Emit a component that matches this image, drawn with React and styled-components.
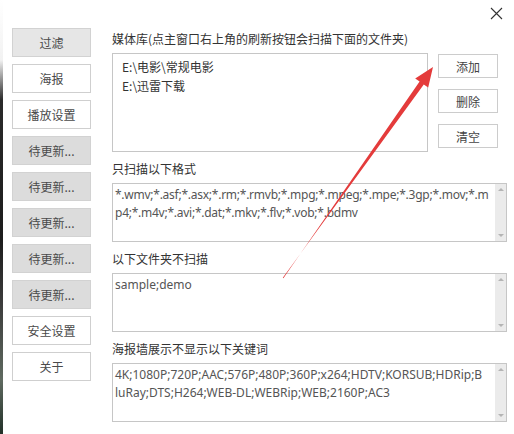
import React from "react";
import styled, { createGlobalStyle } from "styled-components";

const GlobalStyle = createGlobalStyle`
  html, body {
    margin: 0;
    padding: 0;
    background: #ffffff;
  }
  body {
    font-family: "Noto Sans CJK SC", "Noto Sans", sans-serif;
    color: #333;
  }
`;

const sideItems = [
  { label: "过滤", kind: "active" },
  { label: "海报", kind: "normal" },
  { label: "播放设置", kind: "normal" },
  { label: "待更新...", kind: "pending" },
  { label: "待更新...", kind: "pending" },
  { label: "待更新...", kind: "pending" },
  { label: "待更新...", kind: "pending" },
  { label: "待更新...", kind: "pending" },
  { label: "安全设置", kind: "normal" },
  { label: "关于", kind: "normal" },
];

// lines are split where the original control wraps them
const sections = [
  {
    title: "只扫描以下格式",
    tracking: -0.25,
    lines: [
      "*.wmv;*.asf;*.asx;*.rm;*.rmvb;*.mpg;*.mpeg;*.mpe;*.3gp;*.mov;*.m",
      "p4;*.m4v;*.avi;*.dat;*.mkv;*.flv;*.vob;*.bdmv",
    ],
  },
  { title: "以下文件夹不扫描", tracking: 0, lines: ["sample;demo"] },
  {
    title: "海报墙展示不显示以下关键词",
    tracking: 0,
    lines: [
      "4K;1080P;720P;AAC;576P;480P;360P;x264;HDTV;KORSUB;HDRip;B",
      "luRay;DTS;H264;WEB-DL;WEBRip;WEB;2160P;AC3",
    ],
  },
];

function App() {
  return (
    <>
      <GlobalStyle />
      <Page>
        <Edge />
        <Sidebar>
          {sideItems.map((item, i) => (
            <SideButton key={i} $kind={item.kind}>
              {item.label}
            </SideButton>
          ))}
        </Sidebar>
        <Main>
          <Label>媒体库(点主窗口右上角的刷新按钮会扫描下面的文件夹)</Label>
          <LibraryRow>
            <FolderList>
              <FolderItem>E:\电影\常规电影</FolderItem>
              <FolderItem>E:\迅雷下载</FolderItem>
            </FolderList>
            <Actions>
              <ActionButton>添加</ActionButton>
              <ActionButton>删除</ActionButton>
              <ActionButton>清空</ActionButton>
            </Actions>
          </LibraryRow>
          {sections.map((s) => (
            <Section key={s.title}>
              <Label>{s.title}</Label>
              <TextBox>
                <TextContent $tracking={s.tracking}>
                  {s.lines.map((l) => (
                    <TextLine key={l}>{l}</TextLine>
                  ))}
                </TextContent>
                <ScrollBar>
                  <ScrollArrow $dir="up" />
                  <ScrollArrow $dir="down" />
                </ScrollBar>
              </TextBox>
            </Section>
          ))}
        </Main>
        <CloseIcon viewBox="0 0 14 14">
          <path d="M1 1 L12 12 M12 1 L1 12" stroke="#333" strokeWidth="1.1" fill="none" />
        </CloseIcon>
        <Arrow viewBox="0 0 514 434">
          <polygon
            fill="#e43b3b"
            points="283.4,278.2 419.6,81.6 415.2,78.5 433,67 428.2,87.6 423.8,84.5 282.8,277.8"
          />
        </Arrow>
      </Page>
    </>
  );
}

export default App;

const Page = styled.div`
  position: relative;
  width: 514px;
  height: 434px;
  display: flex;
  overflow: hidden;
  background: #fff;
`;

const Edge = styled.div`
  width: 3px;
  flex-shrink: 0;
  background: linear-gradient(
    to bottom,
    #ffffff 0px,
    #f2f2f2 60px,
    #2a2a2a 100px,
    #1c1c1c 240px,
    #3a3a3a 300px,
    #5f6a60 380px,
    #223028 434px
  );
`;

const Sidebar = styled.div`
  display: flex;
  flex-direction: column;
  gap: 7px;
  padding-top: 28px;
  margin-left: 9px;
  width: 79px;
  flex-shrink: 0;
`;

const SideButton = styled.div`
  box-sizing: border-box;
  height: 29px;
  display: flex;
  align-items: center;
  justify-content: center;
  font-size: 12px;
  color: #4a4a4a;
  border: 1px solid ${(p) => (p.$kind === "normal" ? "#cfcfcf" : "#d2d2d2")};
  background: ${(p) =>
    p.$kind === "active" ? "#e6e6e6" : p.$kind === "pending" ? "#dcdcdc" : "#ffffff"};
`;

const Main = styled.div`
  display: flex;
  flex-direction: column;
  padding-top: 31px;
  margin-left: 21px;
  width: 395px;
`;

const Label = styled.div`
  font-size: 12px;
  line-height: 16px;
  height: 16px;
  color: #333;
  white-space: nowrap;
  margin-bottom: 6px;
`;

const LibraryRow = styled.div`
  display: flex;
  gap: 10px;
`;

const FolderList = styled.div`
  box-sizing: border-box;
  width: 316px;
  height: 99px;
  border: 1px solid #c6c6c6;
  padding: 3px 0 0 9px;
`;

const FolderItem = styled.div`
  font-size: 12px;
  line-height: 19px;
  color: #333;
`;

const Actions = styled.div`
  display: flex;
  flex-direction: column;
  gap: 11px;
  padding-top: 1px;
`;

const ActionButton = styled.div`
  box-sizing: border-box;
  width: 60px;
  height: 24px;
  border: 1px solid #cccccc;
  background: #fff;
  font-size: 12px;
  color: #444;
  display: flex;
  align-items: center;
  justify-content: center;
`;

const Section = styled.div`
  margin-top: 9px;
  display: flex;
  flex-direction: column;
`;

const TextBox = styled.div`
  box-sizing: border-box;
  height: 59px;
  border: 1px solid #c6c6c6;
  display: flex;
`;

const TextContent = styled.div`
  flex: 1;
  padding: 2px 3px 0 2px;
  font-family: "Noto Sans", "Noto Sans CJK SC", sans-serif;
  font-size: 12px;
  line-height: 18px;
  letter-spacing: ${(p) => p.$tracking}px;
  color: #555;
  overflow: hidden;
`;

const TextLine = styled.div`
  white-space: nowrap;
`;

const ScrollBar = styled.div`
  width: 11px;
  flex-shrink: 0;
  background: #ebebeb;
  display: flex;
  flex-direction: column;
  justify-content: space-between;
  align-items: center;
  padding: 4px 0;
`;

const ScrollArrow = styled.div`
  width: 0;
  height: 0;
  border-left: 3px solid transparent;
  border-right: 3px solid transparent;
  ${(p) =>
    p.$dir === "up"
      ? "border-bottom: 3px solid #b4b4b4;"
      : "border-top: 3px solid #b4b4b4;"}
`;

const CloseIcon = styled.svg`
  position: absolute;
  left: 490px;
  top: 7px;
  width: 14px;
  height: 14px;
`;

const Arrow = styled.svg`
  position: absolute;
  left: 0;
  top: 0;
  width: 514px;
  height: 434px;
  pointer-events: none;
`;
